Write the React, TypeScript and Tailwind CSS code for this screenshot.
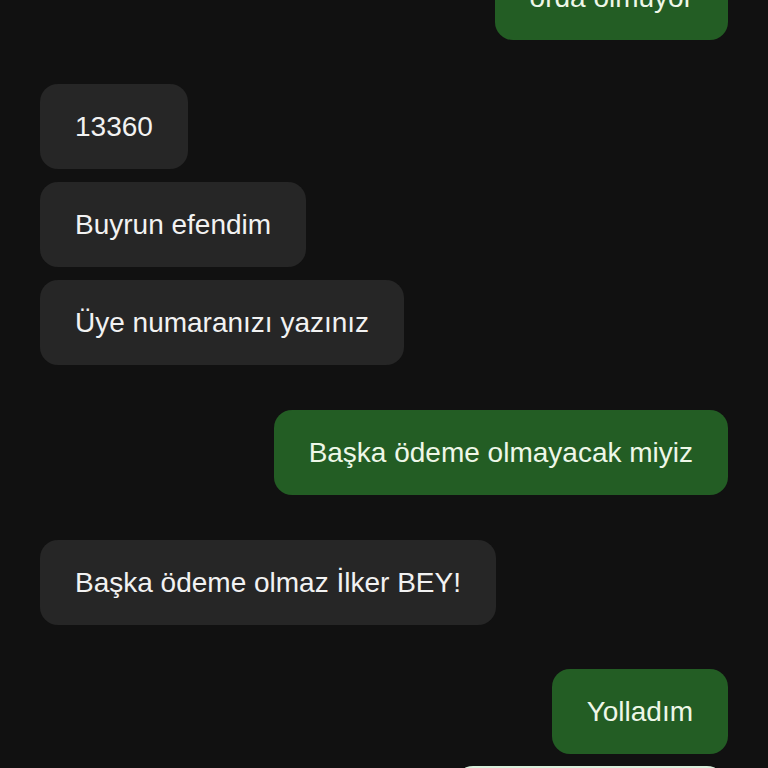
import React from "react";

type Msg = { text: string; me: boolean; gapTop: number };

const msgs: Msg[] = [
  { text: "orda olmuyor", me: true, gapTop: 0 },
  { text: "13360", me: false, gapTop: 44 },
  { text: "Buyrun efendim", me: false, gapTop: 13 },
  { text: "Üye numaranızı yazınız", me: false, gapTop: 13 },
  { text: "Başka ödeme olmayacak miyiz", me: true, gapTop: 45 },
  { text: "Başka ödeme olmaz İlker BEY!", me: false, gapTop: 45 },
  { text: "Yolladım", me: true, gapTop: 44 },
];

export default function App() {
  return (
    <div
      className="w-[768px] h-[768px] overflow-hidden bg-[#111111] px-[40px]"
      style={{ fontFamily: '"Liberation Sans", Arial, sans-serif' }}
    >
      <div className="flex flex-col mt-[-45px]">
        {msgs.map((m, i) => (
          <div
            key={i}
            className={`flex ${m.me ? "justify-end" : "justify-start"} ${
              m.gapTop === 44 ? "mt-[44px]" : m.gapTop === 45 ? "mt-[45px]" : m.gapTop === 13 ? "mt-[13px]" : ""
            }`}
          >
            <div
              className={`h-[85px] flex items-center px-[35px] rounded-[18px] text-[28px] leading-[34px] whitespace-nowrap ${
                m.me ? "bg-[#235d24] text-[#eef7e8]" : "bg-[#262626] text-[#f2f2f2]"
              }`}
            >
              {m.text}
            </div>
          </div>
        ))}
        <div className="flex justify-end mt-[12px] pr-[3px]">
          <div className="w-[270px] h-[85px] rounded-[18px] bg-[#d9efdc]" />
        </div>
      </div>
    </div>
  );
}
